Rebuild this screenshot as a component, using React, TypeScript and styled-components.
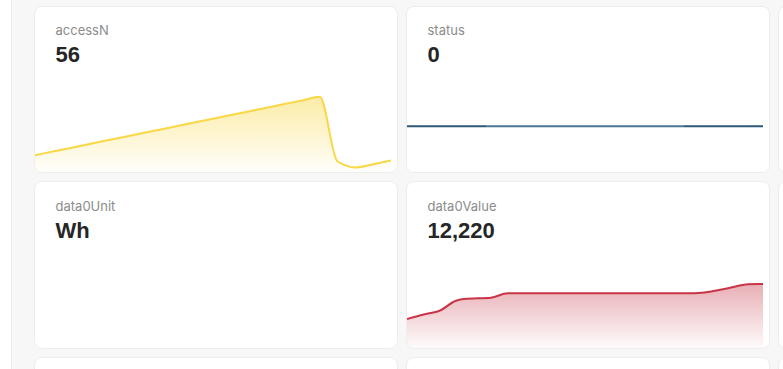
import React from "react";
import styled, { createGlobalStyle } from "styled-components";

type Pt = [number, number];

const GlobalStyle = createGlobalStyle`
  html, body {
    margin: 0;
    padding: 0;
    height: 100%;
    overflow: hidden;
    background: #ffffff;
  }
  #root {
    height: 100%;
  }
`;

const Layout = styled.div`
  display: flex;
  height: 100%;
`;

const SideRail = styled.div`
  flex: 0 0 11px;
  background: #ffffff;
  border-right: 1px solid #ececec;
`;

const Main = styled.main`
  flex: 1;
  min-width: 0;
  overflow: hidden;
  background: #f7f7f7;
  padding: 5.5px 0 0 21.5px;
`;

const Grid = styled.div`
  display: grid;
  grid-template-columns: repeat(3, 364px);
  grid-auto-rows: 167.5px;
  gap: 8px;
`;

const Card = styled.div`
  position: relative;
  display: flex;
  flex-direction: column;
  background: #ffffff;
  border: 1px solid #ededed;
  border-radius: 8px;
  overflow: hidden;
`;

const Header = styled.div`
  padding: 14.5px 21px 0;
`;

const Label = styled.div`
  font-family: Inter, "Noto Sans", sans-serif;
  font-size: 13px;
  line-height: 18px;
  color: #8c8c8c;
`;

const Value = styled.div`
  margin-top: 3px;
  font-family: "Liberation Sans", Arial, sans-serif;
  font-weight: 700;
  font-size: 22px;
  line-height: 26px;
  color: #262626;
`;

const Chart = styled.svg`
  display: block;
  margin-top: auto;
  width: 356px;
  height: 87px;
  flex: 0 0 auto;
`;

// monotone-x cubic path, same shape the charting lib draws
function monotonePath(pts: Pt[]): string {
  const n = pts.length;
  const dx: number[] = [];
  const m: number[] = [];
  for (let i = 0; i < n - 1; i++) {
    dx.push(pts[i + 1][0] - pts[i][0]);
    m.push((pts[i + 1][1] - pts[i][1]) / dx[i]);
  }
  const t: number[] = new Array(n).fill(0);
  t[0] = m[0];
  t[n - 1] = m[n - 2];
  for (let i = 1; i < n - 1; i++) {
    if (m[i - 1] * m[i] <= 0) t[i] = 0;
    else
      t[i] =
        (3 * (dx[i - 1] + dx[i])) /
        ((2 * dx[i] + dx[i - 1]) / m[i - 1] + (dx[i] + 2 * dx[i - 1]) / m[i]);
  }
  let d = `M${pts[0][0]},${pts[0][1]}`;
  for (let i = 0; i < n - 1; i++) {
    const [x0, y0] = pts[i];
    const [x1, y1] = pts[i + 1];
    const h = dx[i] / 3;
    d += ` C${x0 + h},${y0 + t[i] * h} ${x1 - h},${y1 - t[i + 1] * h} ${x1},${y1}`;
  }
  return d;
}

type AreaProps = { id: string; points: Pt[]; stroke: string; fill: string; fillOpacity: number };

function AreaChart({ id, points, stroke, fill, fillOpacity }: AreaProps) {
  const line = monotonePath(points);
  const last = points[points.length - 1];
  const area = `${line} L${last[0]},87 L${points[0][0]},87 Z`;
  return (
    <Chart viewBox="0 0 356 87">
      <defs>
        <linearGradient id={id} x1="0" y1="0" x2="0" y2="1">
          <stop offset="0%" stopColor={fill} stopOpacity={fillOpacity} />
          <stop offset="100%" stopColor={fill} stopOpacity={0.02} />
        </linearGradient>
      </defs>
      <path d={area} fill={`url(#${id})`} />
      <path d={line} fill="none" stroke={stroke} strokeWidth={2} strokeLinejoin="round" />
    </Chart>
  );
}

function FlatLine() {
  return (
    <Chart viewBox="0 0 356 87">
      <line x1={0} y1={41.2} x2={79} y2={41.2} stroke="#2c5876" strokeWidth={2} />
      <line x1={79} y1={41.2} x2={277} y2={41.2} stroke="#4a7694" strokeWidth={2} />
      <line x1={277} y1={41.2} x2={356.5} y2={41.2} stroke="#2c5876" strokeWidth={2} />
    </Chart>
  );
}

// 21 samples, 17.8px apart; the first 17 rise steadily
const step = 17.8;
const accessPoints: Pt[] = [
  ...Array.from({ length: 17 }, (_, i): Pt => [i * step, 70.2 - (58.4 * i) / 16]),
  [302.6, 76.5],
  [320.4, 82.4],
  [338.2, 79.2],
  [356, 75.5],
];

const valuePoints: Pt[] = [
  [0, 58],
  [19, 53],
  [32, 50],
  [49, 39.7],
  [57, 38],
  [84, 36.7],
  [100.7, 32.3],
  [287, 32.3],
  [321, 27.3],
  [341, 23.3],
  [356, 23],
];

type Stat = { label: string; value: string; chart?: React.ReactNode };

const stats: Stat[] = [
  {
    label: "accessN",
    value: "56",
    chart: <AreaChart id="g-access" points={accessPoints} stroke="#fad744" fill="#f8d53a" fillOpacity={0.45} />,
  },
  { label: "status", value: "0", chart: <FlatLine /> },
  { label: "", value: "" },
  { label: "data0Unit", value: "Wh" },
  {
    label: "data0Value",
    value: "12,220",
    chart: <AreaChart id="g-value" points={valuePoints} stroke="#c93446" fill="#c9404f" fillOpacity={0.42} />,
  },
  { label: "", value: "" },
  { label: "", value: "" },
  { label: "", value: "" },
  { label: "", value: "" },
];

export default function App() {
  return (
    <>
      <GlobalStyle />
      <Layout>
        <SideRail />
        <Main>
          <Grid>
            {stats.map((s, i) => (
              <Card key={i}>
                {s.label && (
                  <Header>
                    <Label>{s.label}</Label>
                    <Value>{s.value}</Value>
                  </Header>
                )}
                {s.chart}
              </Card>
            ))}
          </Grid>
        </Main>
      </Layout>
    </>
  );
}
